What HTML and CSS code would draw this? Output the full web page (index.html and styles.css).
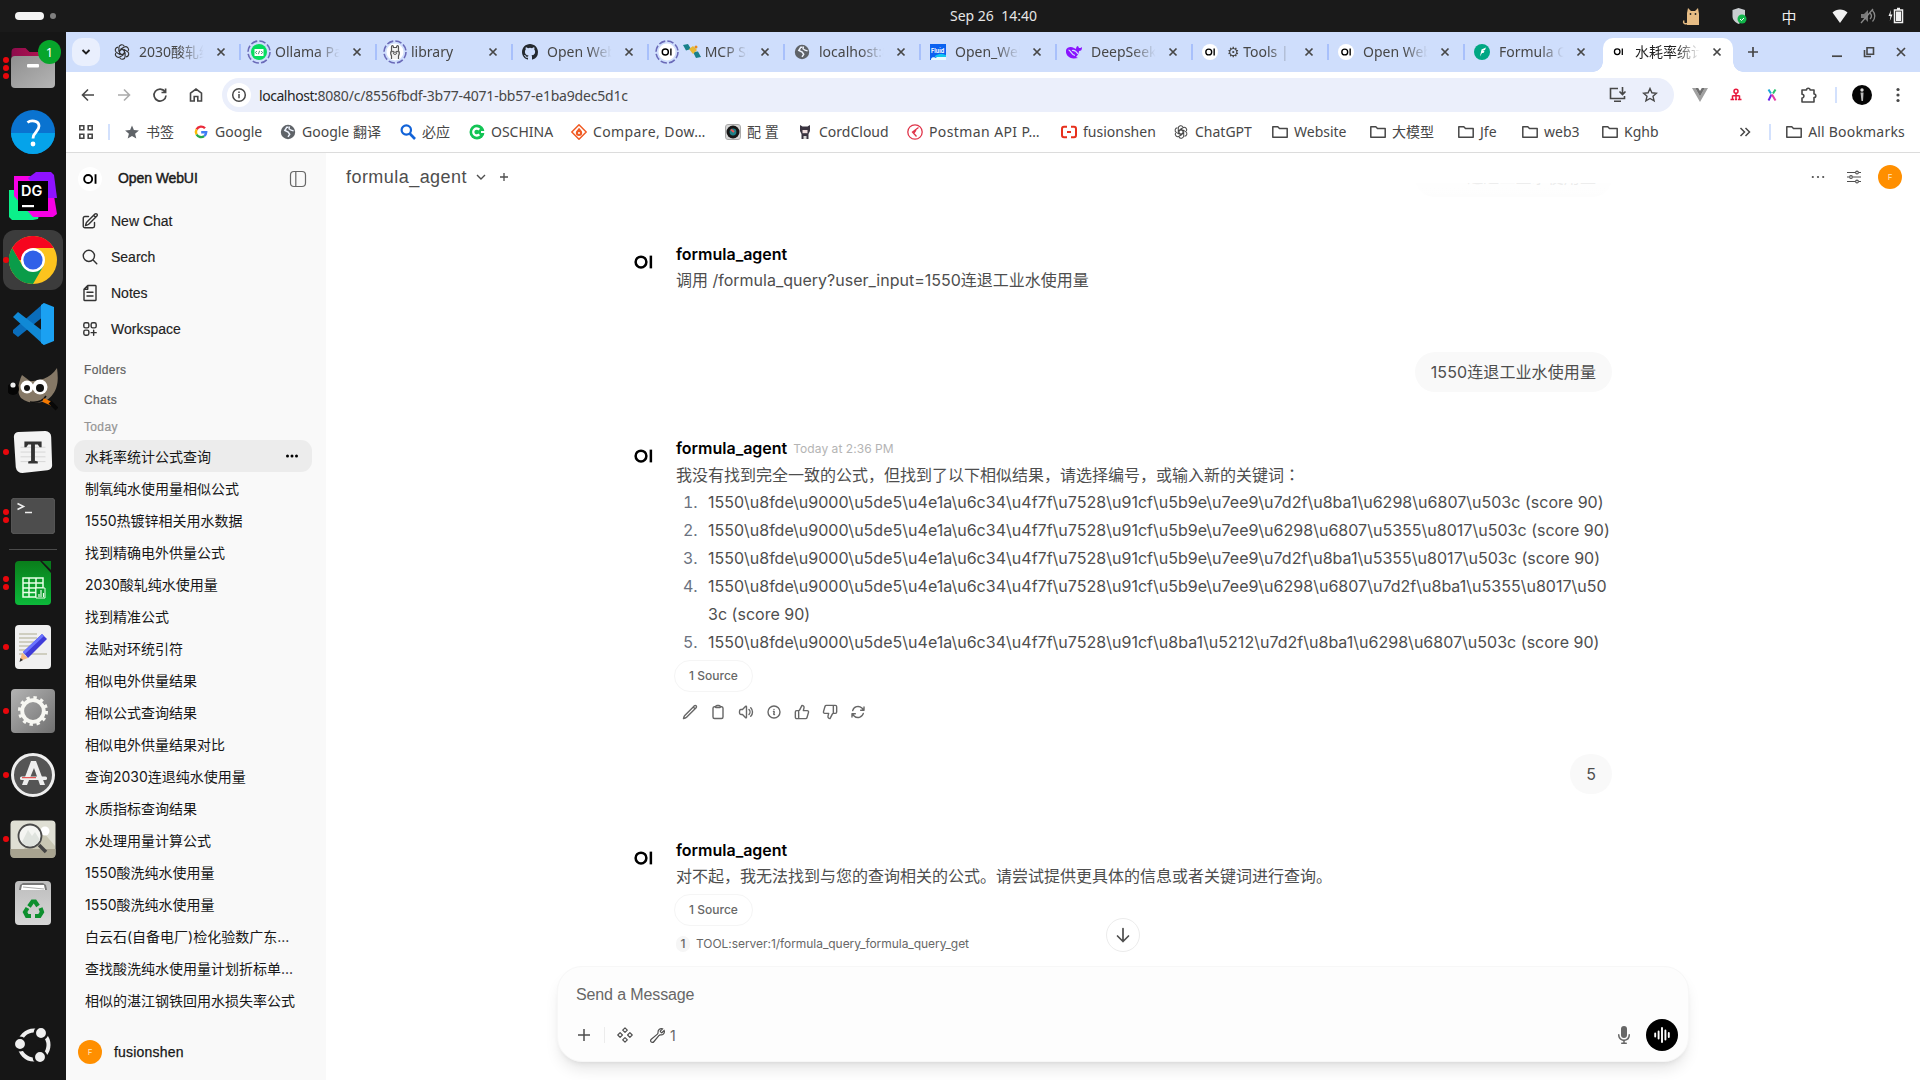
FILE: index.html
```html
<!DOCTYPE html>
<html lang="en">
<head>
<meta charset="utf-8">
<title>水耗率统计公式查询</title>
<link rel="stylesheet" href="styles.css">
</head>
<body>
<svg class="defs" aria-hidden="true">
  <defs>
    <linearGradient id="gGrey" x1="0" y1="0" x2="1" y2="1"><stop offset="0" stop-color="#8f8f8f"/><stop offset="1" stop-color="#b5b5b5"/></linearGradient>
    <linearGradient id="gGear" x1="0" y1="0" x2="1" y2="1"><stop offset="0" stop-color="#b4b4b4"/><stop offset="1" stop-color="#6f6f6f"/></linearGradient>
    <linearGradient id="gRed" x1="0" y1="0" x2="1" y2="0"><stop offset="0" stop-color="#8d0c4c"/><stop offset="1" stop-color="#c21553"/></linearGradient>
    <linearGradient id="gTrash" x1="0" y1="0" x2="0" y2="1"><stop offset="0" stop-color="#bdbdbd"/><stop offset="1" stop-color="#d6d6d6"/></linearGradient>
    <linearGradient id="gDoc" x1="0" y1="0" x2="0" y2="1"><stop offset="0" stop-color="#0a7d1b"/><stop offset="1" stop-color="#0cb93a"/></linearGradient>
    <symbol id="close" viewBox="0 0 16 16"><path d="M4.5 4.5l7 7M11.5 4.5l-7 7" fill="none" stroke="currentColor" stroke-width="1.7"/></symbol>
    <symbol id="folder" viewBox="0 0 16 16"><path d="M.8 13.2V2.8h5l1.700 1.800h7.700v8.600z" fill="none" stroke="currentColor" stroke-width="1.500" stroke-linejoin="round"/></symbol>
    <symbol id="globe" viewBox="0 0 16 16"><circle cx="8" cy="8" r="7.200" fill="#5f6368"/><path d="M8.500 3.200H6.800L4.800 6.500l3.400 1.600 1.500 2.200-1.700 2.500" fill="none" stroke="#eef3fd" stroke-width="1.500"/><path d="M9.500 2.500l-.5 2.200 2 1.500 2.600.6" fill="none" stroke="#eef3fd" stroke-width="1.300"/></symbol>
    <symbol id="openai" viewBox="0 0 16 16"><g fill="none" stroke="currentColor" stroke-width="1.150"><path id="pet" d="M8 5.200L4.900 7V3.600a2.900 2.900 0 0 1 5.400-1.400M8 5.200l2.600 1.500"/><use href="#pet" transform="rotate(60 8 8)"/><use href="#pet" transform="rotate(120 8 8)"/><use href="#pet" transform="rotate(180 8 8)"/><use href="#pet" transform="rotate(240 8 8)"/><use href="#pet" transform="rotate(300 8 8)"/></g></symbol>
    <symbol id="oi" viewBox="0 0 24 24"><circle cx="9.600" cy="12" r="4.300" fill="none" stroke="#000" stroke-width="2"/><path d="M17.500 6.900v10.200" stroke="#000" stroke-width="2"/></symbol>
    <symbol id="ring" viewBox="0 0 24 24"><circle cx="12" cy="12" r="11" fill="none" stroke="#6a6ab8" stroke-width="1.600" stroke-dasharray="6.500 2.140"/></symbol>
  </defs>
</svg>

<div class="desktop">
  <header class="topbar">
    <div class="workspaces"><i class="ws-on"></i><i class="ws-off"></i></div>
    <div class="clock">Sep 26&nbsp; 14:40</div>
    <div class="tray">
      <svg width="20" height="20" viewBox="0 0 20 20"><path d="M5 19V7l1-5 3 3h4l3-3 1 6v11z" fill="#e6bc84"/><path d="M5 17.500c-3 1-4-1-3-3" fill="none" stroke="#e6bc84" stroke-width="1.500"/><circle cx="8.500" cy="8" r=".9" fill="#222"/><circle cx="13.500" cy="8" r=".9" fill="#222"/></svg>
      <svg width="20" height="20" viewBox="0 0 20 20"><path d="M8.500 2l6.500 2v6c0 4-3 6-6.500 8C5 16 2.500 14 2.500 10V4z" fill="#c9cdd0"/><circle cx="12" cy="13" r="4.500" fill="#12b54b"/><path d="M10 13l1.500 1.500L14 12" stroke="#fff" fill="none"/></svg>
      <span class="ime">中</span>
      <svg width="18" height="18" viewBox="0 0 18 18"><path d="M1.500 5.500C5.500 1.600 12.500 1.600 16.500 5.500L9 16z" fill="#f2f2f2"/></svg>
      <svg width="18" height="18" viewBox="0 0 18 18"><path d="M2 7h3l4-4v12l-4-4H2z" fill="#7a7a7a"/><path d="M11 6c2 2 2 4 0 6M13.500 3.500c3 3 3 8 0 11M2 16L14 2" stroke="#8a8a8a" fill="none" stroke-width="1.300"/></svg>
      <svg width="18" height="18" viewBox="0 0 18 18"><path d="M4 3L1.500 9h2L2.800 14 5.500 7.500h-2z" fill="#f2f2f2"/><path d="M7.500 3h8v12.500h-8zM10 1.500h3" fill="none" stroke="#f2f2f2" stroke-width="1.500"/><path d="M9 4.500h5V14H9z" fill="#f2f2f2"/></svg>
    </div>
  </header>

  <div class="workarea">
    <nav class="dock">
      <div class="slot"><span class="dots"><i></i><i></i><i></i></span>
        <svg width="48" height="48" viewBox="0 0 48 48"><path d="M2.500 8a4 4 0 0 1 4-4h10l4 4h21a4 4 0 0 1 4 4v8h-43z" fill="url(#gRed)"/><rect x="2" y="12" width="44" height="32" rx="4" fill="url(#gGrey)"/><rect x="18" y="20" width="12" height="3.500" rx="1" fill="#fff"/></svg>
        <b class="badge">1</b></div>
      <div class="slot"><svg width="44" height="44" viewBox="0 0 44 44"><circle cx="22" cy="22" r="22" fill="#0a73d0"/><path d="M0 23a22 21 0 0 0 44 0z" fill="#05a3ea"/><path d="M16.500 12.500c3-2.500 11.500-2.500 11.500 3.500 0 6-6 6-6 12.500" fill="none" stroke="#fff" stroke-width="2.800"/><circle cx="22" cy="34" r="2.400" fill="#fff"/></svg></div>
      <div class="slot"><svg width="48" height="48" viewBox="0 0 48 48"><path d="M0 18l14 0 18 18-3 11-5 1H3l-3-3z" fill="#0bf08a"/><path d="M5 4h16l24 20 3 18-4 3H24L5 24z" fill="#f700e5"/><path d="M19 6l8-6h15l3 3 3 23-14 0z" fill="#8f12ff"/><rect x="9" y="9" width="30" height="30"/><rect x="13" y="33" width="12" height="2.200" fill="#fff"/><text x="12" y="24" class="dg">DG</text></svg></div>
      <div class="slot"><span class="dots"><i></i></span><div class="focus"><svg width="48" height="48" viewBox="0 0 48 48"><circle cx="24" cy="24" r="24" fill="#fcc31e"/><path d="M3.200 12A24 24 0 0 0 24 48L34.400 30 24 24 13.600 30z" fill="#0a9c49"/><path d="M3.200 12A24 24 0 0 1 44.800 12H24v12H10z" fill="#f6051f"/><circle cx="24" cy="24" r="12" fill="#fff"/><circle cx="24" cy="24" r="9.600" fill="#3060e8"/></svg></div></div>
      <div class="slot"><svg width="44" height="44" viewBox="0 0 44 44"><path d="M33 1v13L7 35l-5-4v-3z" fill="#0a6dbb"/><path d="M2 15l5-5 26 20v13z" fill="#1089d6"/><path d="M33 1l10 4v34l-10 4-3-2V3z" fill="#1ba1f2"/></svg></div>
      <div class="slot"><svg width="50" height="48" viewBox="0 0 50 48"><path d="M14 11l8 6c8 0 20-2 27-13 1 8 2 18-4 26-6 10-22 12-32 4-5-6-2-17 1-23z" fill="#857866"/><circle cx="5" cy="25" r="6" fill="#050505"/><circle cx="5" cy="21" r="2.600" fill="#eee"/><circle cx="19" cy="23" r="6.500" fill="#fff"/><circle cx="32" cy="23" r="7.500" fill="#fff"/><circle cx="19" cy="24" r="3" fill="#111"/><circle cx="32" cy="24" r="4" fill="#111"/><path d="M22 38c7 1 13-1 16-6" fill="none" stroke="#111" stroke-width="1.500"/><path d="M35 36l9 4" stroke="#f57900" stroke-width="4"/><path d="M42 38l7 7" stroke="#080808" stroke-width="4"/></svg></div>
      <div class="slot"><span class="dots"><i></i></span><svg class="typora" width="44" height="44" viewBox="0 0 46 46"><path d="M3 6a5 5 0 0 1 5-5l28-1a6 6 0 0 1 6 6l1 30a5 5 0 0 1-5 5L12 44a7 7 0 0 1-7-6z" fill="#f3f3f3"/><path d="M10 17h26M10 22h26M10 27h26M10 32h26" stroke="#d5d5d5"/><path d="M14 11h18v6h-2l-2-3h-3v17l3 1v2H18v-2l3-1V14h-3l-2 3h-2z" fill="#333"/></svg></div>
      <div class="slot"><span class="dots"><i></i><i></i></span><svg width="44" height="36" viewBox="0 0 44 36"><rect width="44" height="36" rx="4" fill="#4d4d4d" stroke="#666" stroke-width=".6"/><path d="M6.500 5.500l6 3-6 3M14 14.500h7" stroke="#eee" stroke-width="1.600" fill="none"/></svg></div>
      <div class="dock-sep"></div>
      <div class="slot"><span class="dots"><i></i><i></i></span><svg width="36" height="44" viewBox="0 0 36 44"><path d="M4 0h21l11 12v28a4 4 0 0 1-4 4H4a4 4 0 0 1-4-4V4a4 4 0 0 1 4-4z" fill="url(#gDoc)"/><path d="M27 0h9v9z" fill="#087a1d"/><path d="M8 17h20v19H8zM8 22h20M8 27h20M8 31.500h20M14 17v19M21 17v19" fill="none" stroke="#e8ffe8" stroke-width="1.500"/><path d="M21 27h9v10h-9z" fill="#0a9a2b" stroke="#e8ffe8"/><path d="M24 36v-3M26 36v-7M28.500 36v-4" stroke="#e8ffe8" stroke-width="1.200"/></svg></div>
      <div class="slot"><span class="dots"><i></i></span><svg width="36" height="44" viewBox="0 0 36 44"><rect width="36" height="44" rx="4" fill="#f0f0f0"/><path d="M4 9h18M4 13h18M4 17h15M4 21h13M4 25h10M4 29h28" stroke="#c4c2b0" stroke-width="1.600"/><path d="M5 36l2-8 6 5z" fill="#f5b97f"/><path d="M8 27L27 9l5 5-19 19z" fill="#3f3bd8"/><path d="M8 27L27 9l2 2-19 18z" fill="#6b74ff"/><path d="M4.500 37l1-4 2.500 2z" fill="#333"/></svg></div>
      <div class="slot"><span class="dots"><i></i></span><svg width="44" height="44" viewBox="0 0 44 44"><rect width="44" height="44" rx="4" fill="url(#gGear)"/><circle cx="22" cy="22" r="13.300" fill="none" stroke="#f7f7f2" stroke-width="3.500" stroke-dasharray="3.300 3.664"/><circle cx="22" cy="22" r="10.800" fill="none" stroke="#f7f7f2" stroke-width="3.800"/></svg></div>
      <div class="slot"><span class="dots"><i></i></span><svg width="44" height="44" viewBox="0 0 44 44"><circle cx="22" cy="22" r="20.500" fill="#555" stroke="#eee" stroke-width="3"/><path d="M20 8h5l9 24h-5l-6-17-7 17h-5z" fill="#eee"/><rect x="9" y="23.500" width="27" height="3.500" rx="1.500" fill="#eee"/><path d="M11 24.700h14" stroke="#e03030"/></svg></div>
      <div class="slot"><span class="dots"><i></i></span><svg width="46" height="38" viewBox="0 0 46 38"><rect x=".5" y=".5" width="45" height="37" rx="4" fill="#dfdfd4"/><path d="M.5 29h45v5a4 4 0 0 1-4 4h-37a4 4 0 0 1-4-4z" fill="#a8a390"/><path d="M28 6L45 26v3H14z" fill="#c9c7b4"/><circle cx="35" cy="11" r="4.500" fill="#fff"/><circle cx="20" cy="16" r="11.500" fill="#f4f5f2" stroke="#4a4a4a" stroke-width="1.800"/><path d="M12 22l6-12 4 6 3-4 5 8c-4 7-14 9-18 2z" fill="#dfe3de"/><path d="M29 25l7 7" stroke="#444" stroke-width="3.500"/></svg></div>
      <div class="slot"><svg width="36" height="44" viewBox="0 0 36 44"><rect width="36" height="44" rx="4" fill="url(#gTrash)"/><path d="M4 9l1-5 3-2h20l3 2 1 5z" fill="#777"/><path d="M6 9l1-5 22 0 1 5z" fill="#fff"/><path d="M8 6l21 2" stroke="#aaa" fill="none"/><g fill="none" stroke="#0d8f2e" stroke-width="4.200"><path d="M14 25.500l3.500-5h2.500l3 4.500"/><path d="M25.500 27l1.500 4-2.500 4H20"/><path d="M16 35h-4l-2-4 2.500-4"/></g></svg></div>
      <div class="slot last"><svg width="38" height="38" viewBox="0 0 38 38"><circle cx="20" cy="19" r="14.500" fill="none" stroke="#efefef" stroke-width="4"/><g fill="#efefef" stroke="#161616" stroke-width="2.500"><circle cx="27" cy="7" r="6.200"/><circle cx="6" cy="18" r="6.200"/><circle cx="26" cy="31" r="6.200"/></g></svg></div>
    </nav>

    <div class="browser">
      <div class="tabstrip">
        <div class="tab-search"><svg width="12" height="12" viewBox="0 0 12 12"><path d="M2.500 4l3.500 3.500L9.500 4" fill="none" stroke="#1f1f1f" stroke-width="1.900"/></svg></div>
        <div class="tabs">
          <div class="tab"><span class="fav"><svg width="16" height="16" color="#333"><use href="#openai"/></svg></span><span class="ttl">2030酸轧纯水</span><svg class="x"><use href="#close"/></svg></div>
          <div class="tab"><span class="fav"><svg width="24" height="24" viewBox="0 0 24 24"><use href="#ring"/><circle cx="12" cy="12" r="8" fill="#05dd5e"/><rect x="7.500" y="9" width="9" height="7" fill="#fff"/><path d="M9.800 11l-1.300 1.500 1.300 1.500M14.200 11l1.300 1.500-1.300 1.500M12.600 10.800l-1.200 3.400" stroke="#16794a" fill="none" stroke-width=".8"/></svg></span><span class="ttl">Ollama Pattern</span><svg class="x"><use href="#close"/></svg></div>
          <div class="tab"><span class="fav"><svg width="24" height="24" viewBox="0 0 24 24"><use href="#ring"/><circle cx="12" cy="12" r="8.500" fill="#fff"/><path d="M8.500 19v-3c-1-2-1-4 0-5V7c0-2 2-2 2 .5h3c0-2.500 2-2.500 2-.5v4c1 1 1 3 0 5v3" fill="#f2f2f2" stroke="#555" stroke-width="1.200"/><circle cx="10" cy="11.500" r=".7"/><circle cx="14" cy="11.500" r=".7"/><ellipse cx="12" cy="13.200" rx="1.600" ry="1.200" fill="none" stroke="#333" stroke-width=".8"/></svg></span><span class="ttl">library</span><svg class="x"><use href="#close"/></svg></div>
          <div class="tab"><span class="fav"><svg width="16" height="16" viewBox="0 0 16 16"><path fill="#24292f" d="M8 0C3.580 0 0 3.580 0 8c0 3.540 2.290 6.530 5.470 7.590.4.070.55-.17.55-.38 0-.19-.01-.82-.01-1.490-2.010.37-2.530-.49-2.690-.94-.09-.23-.48-.94-.82-1.130-.28-.15-.68-.52-.01-.53.63-.01 1.080.58 1.230.82.72 1.210 1.870.87 2.330.66.07-.52.28-.87.51-1.070-1.780-.2-3.640-.89-3.640-3.950 0-.87.31-1.590.82-2.150-.08-.2-.36-1.020.08-2.120 0 0 .67-.21 2.200.82a7.600 7.600 0 0 1 4 0c1.530-1.040 2.200-.82 2.200-.82.44 1.100.16 1.920.08 2.120.51.560.82 1.270.82 2.150 0 3.070-1.870 3.750-3.650 3.950.29.25.54.73.54 1.480 0 1.070-.01 1.930-.01 2.200 0 .21.150.46.55.38A8 8 0 0 0 16 8c0-4.420-3.580-8-8-8z"/></svg></span><span class="ttl">Open WebUI</span><svg class="x"><use href="#close"/></svg></div>
          <div class="tab"><span class="fav"><svg width="24" height="24" viewBox="0 0 24 24"><use href="#ring"/><circle cx="12" cy="12" r="8.500" fill="#fff"/><use href="#oi" x="3.500" y="3.500" width="17" height="17"/></svg></span><span class="ttl"><svg class="sat" width="18" height="16" viewBox="0 0 18 16"><path d="M0 2l5-1 3 5-5 1.500zM10 9l5-.5 3 5.500-5 1z" fill="#17808a"/><path d="M6 6l4-3 4 4-4 4z" fill="#e7b934"/><circle cx="13" cy="4" r="1.500" fill="#e88b1a"/></svg> MCP Support</span><svg class="x"><use href="#close"/></svg></div>
          <div class="tab"><span class="fav"><svg width="16" height="16"><use href="#globe"/></svg></span><span class="ttl">localhost:8000</span><svg class="x"><use href="#close"/></svg></div>
          <div class="tab"><span class="fav"><svg width="16" height="16" viewBox="0 0 16 16"><rect width="16" height="16" fill="#0b62f0"/><path d="M1 15c2-3 4-1 5-1 2-3 5-3 6-1 2-2 4 0 4 0v3H1z" fill="#e9fbff"/><path d="M5 12c4-3 8-2 11-1v2H5z" fill="#14c6ef"/><text x="1" y="9" class="fluid">Fluid</text></svg></span><span class="ttl">Open_WebUI</span><svg class="x"><use href="#close"/></svg></div>
          <div class="tab"><span class="fav"><svg width="16" height="16" viewBox="0 0 16 16"><path d="M0 6c1-3 5-4 8-2l2 1c0-2 1-3 2-3l1 2c1 0 2 0 3-1 0 3-1 4-3 4 0 3-2 5-3 6l2 1-4 .5C4 15-1 11 0 6z" fill="#8a14ff"/><path d="M6 6.500c3-1 5 2 6 3.500M2.500 6c2 0 3 5 6.500 5.500" fill="none" stroke="#cfdefc" stroke-width="1.200"/></svg></span><span class="ttl">DeepSeek - AI</span><svg class="x"><use href="#close"/></svg></div>
          <div class="tab"><span class="fav"><svg width="16" height="16" viewBox="0 0 16 16"><circle cx="8" cy="8" r="8" fill="#fff"/><use href="#oi" x=".2" y="-.2" width="16.400" height="16.400"/></svg></span><span class="ttl">⚙ Tools | Open</span><svg class="x"><use href="#close"/></svg></div>
          <div class="tab"><span class="fav"><svg width="16" height="16" viewBox="0 0 16 16"><circle cx="8" cy="8" r="8" fill="#fff"/><use href="#oi" x=".2" y="-.2" width="16.400" height="16.400"/></svg></span><span class="ttl">Open WebUI</span><svg class="x"><use href="#close"/></svg></div>
          <div class="tab"><span class="fav"><svg width="16" height="16" viewBox="0 0 16 16"><circle cx="8" cy="8" r="8" fill="#00a783"/><path d="M6 12.500L7.500 5.500 12 3.500 11 6 8.500 7h2l-1 2H8z" fill="#fff"/></svg></span><span class="ttl">Formula Query</span><svg class="x"><use href="#close"/></svg></div>
          <div class="tab active"><span class="fav"><svg width="16" height="16" viewBox="0 0 16 16"><use href="#oi" x="1" y="0" width="15.500" height="15.500"/></svg></span><span class="ttl">水耗率统计公式</span><svg class="x"><use href="#close"/></svg></div>
        </div>
        <svg class="newtab" width="14" height="14" viewBox="0 0 14 14"><path d="M7 2v10M2 7h10" stroke="#474747" stroke-width="1.700"/></svg>
        <div class="winctl">
          <svg width="14" height="14" viewBox="0 0 14 14"><path d="M2 11.200h10" stroke="#474747" stroke-width="1.700"/></svg>
          <svg width="14" height="14" viewBox="0 0 14 14"><path d="M5 2.800h6.500v6.500H5zM2.500 5v6.500H9" fill="none" stroke="#474747" stroke-width="1.600"/></svg>
          <svg width="14" height="14" viewBox="0 0 14 14"><path d="M3 3l8 8M11 3l-8 8" stroke="#474747" stroke-width="1.700"/></svg>
        </div>
      </div>

      <div class="toolbar">
        <div class="navbtns">
          <svg width="16" height="16" viewBox="0 0 16 16"><path d="M14 8H3M8 2.500L2.500 8 8 13.500" fill="none" stroke="#474747" stroke-width="1.600"/></svg>
          <svg width="16" height="16" viewBox="0 0 16 16"><path d="M2 8h11M8 2.500L13.500 8 8 13.500" fill="none" stroke="#ababab" stroke-width="1.600"/></svg>
          <svg width="16" height="16" viewBox="0 0 16 16"><path d="M13 4.700A6 6 0 1 0 14 8.500M13.600 1.500v4H9.500" fill="none" stroke="#474747" stroke-width="1.700"/></svg>
          <svg width="16" height="16" viewBox="0 0 16 16"><path d="M2.500 6.200L8 2l5.500 4.200V14H9.800V9.500H6.200V14H2.500z" fill="none" stroke="#474747" stroke-width="1.600"/></svg>
        </div>
        <div class="omnibox">
          <span class="info"><svg width="16" height="16" viewBox="0 0 16 16"><circle cx="8" cy="8" r="6.300" fill="none" stroke="#474747" stroke-width="1.500"/><path d="M8 7v4.200M8 4.400v1.500" stroke="#474747" stroke-width="1.500"/></svg></span>
          <span class="url"><em>localhost:</em>8080/c/8556fbdf-3b77-4071-bb57-e1ba9dec5d1c</span>
          <svg width="18" height="16" viewBox="0 0 18 16"><path d="M9 1.500H1.500v10h14V9M5 14.200h7M13.500 0v7M10.500 4.500l3 3 3-3" fill="none" stroke="#474747" stroke-width="1.600"/></svg>
          <svg width="16" height="16" viewBox="0 0 16 16"><path d="M8 1.500l1.900 4.300 4.600.4-3.500 3.100 1.100 4.600L8 11.500l-4.100 2.400L5 9.300 1.500 6.200l4.600-.4z" fill="none" stroke="#474747" stroke-width="1.400"/></svg>
        </div>
        <div class="exts">
          <svg width="16" height="16" viewBox="0 0 16 16"><path d="M0 1h3.200L8 9.500 12.800 1H16L8 15z" fill="#a0a0a0"/><path d="M3.200 1h3L8 4l1.800-3h3L8 9.500z" fill="#707070"/></svg>
          <svg width="14" height="16" viewBox="0 0 14 16"><circle cx="7" cy="4.200" r="2" fill="none" stroke="#e8173c" stroke-width="1.500"/><path d="M7 6v7M3.500 8.700h7M3.500 8.500V13M10.500 8.500V13M1.500 12.600h3.500M9 12.600h3.500M5.800 12.600h2.400" stroke="#e8173c" stroke-width="1.500"/></svg>
          <svg width="14" height="16" viewBox="0 0 14 16"><path d="M3.500 2.500l2.500 4" stroke="#1ba7d8" stroke-width="2"/><path d="M10.500 2.500L8 6.500" stroke="#27c26c" stroke-width="2"/><path d="M6.500 7.500l-3 6" stroke="#6a24e8" stroke-width="2"/><path d="M7 7.500l3.500 6" stroke="#e33aa4" stroke-width="2"/></svg>
          <svg width="18" height="18" viewBox="0 0 18 18"><path d="M2 4h4.500a1.800 1.800 0 0 1 3.600 0H14v4a1.800 1.800 0 0 1 0 3.600V16H2v-4a1.800 1.800 0 0 0 0-3.800z" fill="none" stroke="#474747" stroke-width="1.600" stroke-linejoin="round"/></svg>
          <i class="bar"></i>
          <svg width="20" height="20" viewBox="0 0 20 20"><circle cx="10" cy="10" r="10" fill="#050505"/><circle cx="10" cy="5" r="1.700" fill="#ddd"/><path d="M8.500 7.500h3L11 16H9.500z" fill="#bbb"/></svg>
          <svg width="16" height="16" viewBox="0 0 16 16" fill="#474747"><circle cx="8" cy="2.500" r="1.600"/><circle cx="8" cy="8" r="1.600"/><circle cx="8" cy="13.500" r="1.600"/></svg>
        </div>
      </div>

      <div class="bookmarks">
        <svg class="apps" width="16" height="16" viewBox="0 0 16 16"><path d="M1.800 1.800h4v4h-4zM10.200 1.800h4v4h-4zM1.800 10.200h4v4h-4zM10.200 10.200h4v4h-4z" fill="none" stroke="#474747" stroke-width="1.600"/></svg>
        <i class="bar"></i>
        <div class="marks">
          <span><svg viewBox="0 0 16 16"><path d="M8 1.500l1.900 4.600 5 .4-3.800 3.200 1.200 4.900L8 12l-4.300 2.600 1.200-4.900L1.100 6.500l5-.4z" fill="#5f6368"/></svg>书签</span>
          <span><svg viewBox="0 0 16 16"><g fill="none" stroke-width="2.400"><path d="M12 4.300A5.200 5.200 0 0 0 3.600 5.300" stroke="#ea2b3a"/><path d="M3.600 5.300a5.200 5.200 0 0 0 0 5.200" stroke="#fcba05"/><path d="M3.600 10.500a5.200 5.200 0 0 0 7.600 1.600" stroke="#25a84c"/><path d="M11.200 12.100A5.200 5.200 0 0 0 13.200 8.200H8.200" stroke="#3e7df5"/></g></svg>Google</span>
          <span><svg><use href="#globe"/></svg>Google 翻译</span>
          <span><svg viewBox="0 0 16 16"><circle cx="6.300" cy="6" r="4.700" fill="none" stroke="#1263d8" stroke-width="2.200"/><path d="M9.700 9.500L15 15" stroke="#1263d8" stroke-width="2.600"/></svg>必应</span>
          <span><svg viewBox="0 0 16 16"><circle cx="8" cy="8" r="7.500" fill="#12c454"/><path d="M10.300 5.600a3.500 3.500 0 1 0 0 4.800" fill="none" stroke="#fff" stroke-width="2.300"/><path d="M12 7h4v2h-4z" fill="#fff"/></svg>OSCHINA</span>
          <span class="cut"><svg viewBox="0 0 16 16"><path d="M8 .8L15.200 8 8 15.200.8 8z" fill="none" stroke="#f05a22" stroke-width="1.500" stroke-linejoin="round"/><path d="M8 3.800c2 2 3.200 3.500 3.200 5a3.200 3.200 0 0 1-6.400 0c0-1.500 1.700-3 3.200-5z" fill="#f05a22"/><circle cx="8" cy="9" r="1" fill="#fff"/></svg>Compare, Dow…</span>
          <span><svg viewBox="0 0 16 16"><rect x=".5" y=".5" width="15" height="15" rx="2.500" fill="#d8d8d8" stroke="#aaa"/><circle cx="8" cy="8" r="6.500" fill="#161616"/><circle cx="8" cy="8" r="3.400" fill="#1e7f86"/><path d="M6 5.500l3 2.500" stroke="#e55" stroke-width="2"/></svg>配 置</span>
          <span><svg viewBox="0 0 16 16"><path d="M3 1l2.500 1.500h5L13 1v6l-1.500 3v5h-7v-5L3 7z" fill="#3a3440"/><rect x="5.500" y="6" width="5" height="3.200" fill="#f0dede"/><path d="M6.500 12h3v3h-3z" fill="#d8d8d8"/></svg>CordCloud</span>
          <span class="cut"><svg viewBox="0 0 16 16"><circle cx="8" cy="8" r="7.200" fill="none" stroke="#e0354a" stroke-width="1.300"/><path d="M11.500 3.500L5.500 8l4 4.500M9 6L6.500 9.500" fill="none" stroke="#e0354a" stroke-width="1.300"/></svg>Postman API P…</span>
          <span><svg viewBox="0 0 16 16"><path d="M6 2.800H3Q1 2.800 1 5v6q0 2.200 2 2.200h3M10 2.800h3q2 0 2 2.200v6q0 2.200-2 2.200h-3M6 8h4" fill="none" stroke="#e7301c" stroke-width="2"/></svg>fusionshen</span>
          <span><svg viewBox="0 0 16 16"><use href="#openai" x="1" y="1" width="14" height="14"/></svg>ChatGPT</span>
          <span><svg><use href="#folder"/></svg>Website</span>
          <span><svg><use href="#folder"/></svg>大模型</span>
          <span><svg><use href="#folder"/></svg>Jfe</span>
          <span><svg><use href="#folder"/></svg>web3</span>
          <span><svg><use href="#folder"/></svg>Kghb</span>
        </div>
        <svg class="more" width="12" height="12" viewBox="0 0 12 12"><path d="M1.500 2L5.500 6l-4 4M6.500 2l4 4-4 4" fill="none" stroke="#474747" stroke-width="1.500"/></svg>
        <i class="bar"></i>
        <span class="all"><svg><use href="#folder"/></svg>All Bookmarks</span>
      </div>

      <div class="page">
        <aside class="side">
          <div class="brand">
            <span class="logo"><svg width="24" height="24" viewBox="0 0 24 24"><use href="#oi" x="1.200" y=".8" width="22.400" height="22.400"/></svg></span>
            <strong>Open WebUI</strong>
            <svg width="18" height="18" viewBox="0 0 18 18"><rect x="1.500" y="1.500" width="15" height="15" rx="3.500" fill="none" stroke="#676767" stroke-width="1.200"/><path d="M6.800 2v14" stroke="#676767" stroke-width="1.200"/></svg>
          </div>
          <div class="nav">
            <a><svg viewBox="0 0 24 24"><path d="m16.862 4.487 1.687-1.688a1.875 1.875 0 1 1 2.652 2.652L10.582 16.070a4.500 4.500 0 0 1-1.897 1.130L6 18l.8-2.685a4.500 4.500 0 0 1 1.130-1.897l8.932-8.931Zm0 0L19.500 7.125M18 14v4.750A2.250 2.250 0 0 1 15.750 21H5.250A2.250 2.250 0 0 1 3 18.750V8.250A2.250 2.250 0 0 1 5.250 6H10"/></svg>New Chat</a>
            <a><svg viewBox="0 0 24 24"><path d="m21 21-5.197-5.197m0 0A7.500 7.500 0 1 0 5.196 5.196a7.500 7.500 0 0 0 10.607 10.607Z"/></svg>Search</a>
            <a><svg viewBox="0 0 24 24"><path d="M4 21.400V7l5-5h10.400a.6.600 0 0 1 .6.600v18.800a.6.600 0 0 1-.6.600H4.600a.6.600 0 0 1-.6-.6ZM4 7h5V2M8 11h8M8 16h8"/></svg>Notes</a>
            <a><svg viewBox="0 0 24 24"><path d="M13.500 16.875h3.375m0 0h3.375m-3.375 0V13.500m0 3.375v3.375M6 10.500h2.250a2.250 2.250 0 0 0 2.250-2.250V6a2.250 2.250 0 0 0-2.250-2.250H6A2.250 2.250 0 0 0 3.750 6v2.250A2.250 2.250 0 0 0 6 10.500Zm0 9.750h2.250A2.250 2.250 0 0 0 10.500 18v-2.250a2.250 2.250 0 0 0-2.250-2.250H6a2.250 2.250 0 0 0-2.250 2.250V18A2.250 2.250 0 0 0 6 20.250Zm9.750-9.750H18a2.250 2.250 0 0 0 2.250-2.250V6A2.250 2.250 0 0 0 18 3.750h-2.250A2.250 2.250 0 0 0 13.500 6v2.250a2.250 2.250 0 0 0 2.250 2.250Z"/></svg>Workspace</a>
          </div>
          <div class="label folders">Folders</div>
          <div class="label">Chats</div>
          <div class="label day">Today</div>
          <ul class="chats">
            <li class="sel">水耗率统计公式查询<svg width="16" height="16" viewBox="0 0 16 16"><circle cx="3.500" cy="8" r="1.500"/><circle cx="8" cy="8" r="1.500"/><circle cx="12.500" cy="8" r="1.500"/></svg></li>
            <li>制氧纯水使用量相似公式</li>
            <li>1550热镀锌相关用水数据</li>
            <li>找到精确电外供量公式</li>
            <li>2030酸轧纯水使用量</li>
            <li>找到精准公式</li>
            <li>法贴对环统引符</li>
            <li>相似电外供量结果</li>
            <li>相似公式查询结果</li>
            <li>相似电外供量结果对比</li>
            <li>查询2030连退纯水使用量</li>
            <li>水质指标查询结果</li>
            <li>水处理用量计算公式</li>
            <li>1550酸洗纯水使用量</li>
            <li>1550酸洗纯水使用量</li>
            <li>白云石(自备电厂)检化验数广东...</li>
            <li>查找酸洗纯水使用量计划折标单...</li>
            <li>相似的湛江钢铁回用水损失率公式</li>
          </ul>
          <div class="user"><span class="avatar">F</span>fusionshen</div>
        </aside>

        <main class="main">
          <div class="mainbar">
            <span class="model">formula_agent</span>
            <svg class="chev" width="12" height="12" viewBox="0 0 12 12"><path d="M2 4l4 4 4-4" fill="none" stroke="#4e4e4e" stroke-width="1.400"/></svg>
            <svg class="add" width="10" height="10" viewBox="0 0 10 10"><path d="M5 1v8M1 5h8" stroke="#4e4e4e" stroke-width="1.300"/></svg>
            <svg class="el" width="16" height="16" viewBox="0 0 16 16" fill="#4e4e4e"><circle cx="2.800" cy="8" r="1.100"/><circle cx="8" cy="8" r="1.100"/><circle cx="13.200" cy="8" r="1.100"/></svg>
            <svg class="tune" width="16" height="16" viewBox="0 0 16 16"><path d="M1 3.500h8M13 3.500h2M1 8h2M7 8h8M1 12.500h8M13 12.500h2" stroke="#4e4e4e" stroke-width="1.200"/><g fill="none" stroke="#4e4e4e" stroke-width="1.100"><circle cx="11" cy="3.500" r="1.400"/><circle cx="5" cy="8" r="1.400"/><circle cx="11" cy="12.500" r="1.400"/></g></svg>
            <span class="avatar">F</span>
          </div>

          <div class="thread">
            <div class="ask first"><p>1550连退工业水使用量</p></div>
            <article class="msg m1">
              <svg class="face"><use href="#oi"/></svg>
              <div class="body"><h3>formula_agent</h3><p>调用 /formula_query?user_input=1550连退工业水使用量</p></div>
            </article>
            <div class="ask a2"><p>1550连退工业水使用量</p></div>
            <article class="msg m2">
              <svg class="face"><use href="#oi"/></svg>
              <div class="body">
                <h3>formula_agent<time>Today at 2:36 PM</time></h3>
                <p>我没有找到完全一致的公式，但找到了以下相似结果，请选择编号，或输入新的关键词<span class="colon" lang="zh-TW">：</span></p>
                <ol>
                  <li>1550\u8fde\u9000\u5de5\u4e1a\u6c34\u4f7f\u7528\u91cf\u5b9e\u7ee9\u7d2f\u8ba1\u6298\u6807\u503c (score 90)</li>
                  <li>1550\u8fde\u9000\u5de5\u4e1a\u6c34\u4f7f\u7528\u91cf\u5b9e\u7ee9\u6298\u6807\u5355\u8017\u503c (score 90)</li>
                  <li>1550\u8fde\u9000\u5de5\u4e1a\u6c34\u4f7f\u7528\u91cf\u5b9e\u7ee9\u7d2f\u8ba1\u5355\u8017\u503c (score 90)</li>
                  <li>1550\u8fde\u9000\u5de5\u4e1a\u6c34\u4f7f\u7528\u91cf\u5b9e\u7ee9\u6298\u6807\u7d2f\u8ba1\u5355\u8017\u50<br>3c (score 90)</li>
                  <li>1550\u8fde\u9000\u5de5\u4e1a\u6c34\u4f7f\u7528\u91cf\u8ba1\u5212\u7d2f\u8ba1\u6298\u6807\u503c (score 90)</li>
                </ol>
                <span class="pill">1 Source</span>
                <div class="acts">
                  <svg viewBox="0 0 24 24"><path d="m16.862 4.487 1.687-1.688a1.875 1.875 0 1 1 2.652 2.652L6.832 19.820a4.500 4.500 0 0 1-1.897 1.130l-2.685.8.8-2.685a4.500 4.500 0 0 1 1.130-1.897L16.863 4.487Zm0 0L19.500 7.125"/></svg>
                  <svg viewBox="0 0 24 24"><path d="M15.666 3.888A2.250 2.250 0 0 0 13.500 2.250h-3c-1.030 0-1.900.693-2.166 1.638m7.332 0c.055.194.084.400.084.612a.750.750 0 0 1-.750.750H9a.750.750 0 0 1-.750-.750c0-.212.030-.418.084-.612m7.332 0c.646.049 1.288.110 1.927.184 1.100.128 1.907 1.077 1.907 2.185V19.500a2.250 2.250 0 0 1-2.250 2.250H6.750A2.250 2.250 0 0 1 4.500 19.500V6.257c0-1.108.806-2.057 1.907-2.185a48.208 48.208 0 0 1 1.927-.184"/></svg>
                  <svg viewBox="0 0 24 24"><path d="M19.114 5.636a9 9 0 0 1 0 12.728M16.463 8.288a5.250 5.250 0 0 1 0 7.424M6.750 8.250l4.720-4.720a.750.750 0 0 1 1.280.530v15.880a.750.750 0 0 1-1.280.530l-4.720-4.720H4.510c-.880 0-1.704-.507-1.938-1.354A9.009 9.009 0 0 1 2.250 12c0-.830.112-1.633.322-2.396C2.806 8.756 3.630 8.250 4.510 8.250H6.750Z"/></svg>
                  <svg viewBox="0 0 24 24"><path d="m11.250 11.250.041-.020a.750.750 0 0 1 1.063.852l-.708 2.836a.750.750 0 0 0 1.063.853l.041-.021M21 12a9 9 0 1 1-18 0 9 9 0 0 1 18 0Zm-9-3.750h.008v.008H12V8.250Z"/></svg>
                  <svg viewBox="0 0 24 24"><path d="M7 10v12M15 5.880 14 10h5.830a2 2 0 0 1 1.920 2.560l-2.330 8A2 2 0 0 1 17.500 22H4a2 2 0 0 1-2-2v-8a2 2 0 0 1 2-2h2.760a2 2 0 0 0 1.790-1.110L12 2a3.130 3.130 0 0 1 3 3.880Z"/></svg>
                  <svg viewBox="0 0 24 24"><path d="M17 14V2M9 18.120 10 14H4.170a2 2 0 0 1-1.920-2.560l2.330-8A2 2 0 0 1 6.500 2H20a2 2 0 0 1 2 2v8a2 2 0 0 1-2 2h-2.760a2 2 0 0 0-1.790 1.110L12 22a3.130 3.130 0 0 1-3-3.880Z"/></svg>
                  <svg viewBox="0 0 24 24"><path d="M16.023 9.348h4.992v-.001M2.985 19.644v-4.992m0 0h4.992m-4.993 0 3.181 3.183a8.250 8.250 0 0 0 13.803-3.700M4.031 9.865a8.250 8.250 0 0 1 13.803-3.700l3.181 3.182m0-4.991v4.990"/></svg>
                </div>
              </div>
            </article>
            <div class="ask a3"><p>5</p></div>
            <article class="msg m3">
              <svg class="face"><use href="#oi"/></svg>
              <div class="body">
                <h3>formula_agent</h3>
                <p>对不起，我无法找到与您的查询相关的公式。请尝试提供更具体的信息或者关键词进行查询。</p>
                <span class="pill">1 Source</span>
                <div class="cite"><b>1</b>TOOL:server:1/formula_query_formula_query_get</div>
              </div>
            </article>
          </div>

          <div class="composer-wrap">
            <div class="todown"><svg width="20" height="20" viewBox="0 0 20 20"><path d="M10 3.500v13M4.500 11l5.500 5.500 5.500-5.500" fill="none" stroke="#4e4e4e" stroke-width="1.700" stroke-linecap="round" stroke-linejoin="round"/></svg></div>
            <div class="composer">
              <div class="ph">Send a Message</div>
              <div class="tools">
                <svg class="t-plus" width="14" height="14" viewBox="0 0 14 14"><path d="M7 1v12M1 7h12" stroke="#4e4e4e" stroke-width="1.500"/></svg>
                <i></i>
                <svg class="t-flow" width="16" height="16" viewBox="0 0 16 16"><g fill="none" stroke="#4e4e4e" stroke-width="1.200"><path d="M8 .8l2.300 2.300L8 5.400 5.700 3.100zM8 10.600l2.300 2.300L8 15.200l-2.300-2.300zM3.100 5.700L5.400 8l-2.300 2.300L.8 8zM12.900 5.700L15.200 8l-2.300 2.300L10.600 8z" stroke-linejoin="round"/></g></svg>
                <svg class="t-wrench" width="17" height="17" viewBox="0 0 24 24"><path d="M21.750 6.750a4.500 4.500 0 0 1-4.884 4.484c-1.076-.091-2.264.071-2.950.904l-7.152 8.684a2.548 2.548 0 1 1-3.586-3.586l8.684-7.152c.833-.686.995-1.874.904-2.950a4.500 4.500 0 0 1 6.336-4.486l-3.276 3.276a3.004 3.004 0 0 0 2.250 2.250l3.276-3.276c.256.565.398 1.192.398 1.852ZM4.867 19.125h.008" fill="none" stroke="#4e4e4e" stroke-width="1.700"/></svg>
                <span>1</span>
                <svg class="t-mic" width="20" height="20" viewBox="0 0 20 20" fill="#676767"><path d="M7 4a3 3 0 0 1 6 0v6a3 3 0 1 1-6 0V4Z"/><path d="M5.500 9.643a.750.750 0 0 0-1.500 0V10c0 3.060 2.290 5.585 5.250 5.954V17.500h-1.500a.750.750 0 0 0 0 1.500h4.500a.750.750 0 0 0 0-1.500h-1.500v-1.546A6.001 6.001 0 0 0 16 10v-.357a.750.750 0 0 0-1.500 0V10a4.500 4.500 0 0 1-9 0v-.357Z"/></svg>
                <svg class="t-voice" width="32" height="32" viewBox="0 0 32 32"><circle cx="16" cy="16" r="16"/><path d="M9.200 14.500v3M12.600 12.500v7M16 9v14M19.400 11.500v9M22.800 14v4" stroke="#fff" stroke-width="1.900" stroke-linecap="round"/></svg>
              </div>
            </div>
          </div>
        </main>
      </div>
    </div>
  </div>
</div>
</body>
</html>
```
FILE: styles.css
```css
* { box-sizing: border-box; }
body { margin: 0; width: 1920px; height: 1080px; overflow: hidden; background: #161616; }
.defs { position: absolute; width: 0; height: 0; }
svg { display: block; flex: none; }
p, h3, ul, ol { margin: 0; padding: 0; }
.desktop { display: flex; flex-direction: column; width: 1920px; height: 1080px; font-family: "Noto Sans", "Noto Sans CJK SC", "DejaVu Sans", sans-serif; font-size: 14px; }

/* system bar */
.topbar { display: grid; grid-template-columns: 950px 1fr auto; align-items: center; height: 32px; background: #1a1a1a; color: #e6e6e6; }
.workspaces { display: flex; align-items: center; gap: 6px; padding-left: 15px; }
.ws-on { width: 29px; height: 8px; border-radius: 4px; background: #f4f4f4; }
.ws-off { width: 6px; height: 6px; border-radius: 50%; background: #808080; }
.clock { line-height: 32px; white-space: nowrap; }
.tray { display: flex; align-items: center; padding-right: 15px; }
.tray svg:nth-child(2) { margin: 0 0 0 28px; }
.ime { margin: 0 34px 0 31px; color: #eee; font-size: 15px; width: 16px; text-align: center; }
.ime + svg + svg { margin: 0 10px 0 10px; }

.workarea { display: flex; flex: 1; min-height: 0; }

/* dock */
.dock { display: flex; flex-direction: column; width: 66px; padding: 4px 0 3px; background: #161616; }
.slot { position: relative; display: flex; align-items: center; justify-content: center; height: 64px; flex: none; }
.slot.last { margin-top: auto; }
.typora { margin-top: 1px; }
.dots { position: absolute; left: 3px; top: 0; height: 64px; display: flex; flex-direction: column; justify-content: center; gap: 2.200px; }
.dots i { width: 5.800px; height: 5.800px; border-radius: 50%; background: #e8070c; }
.badge { position: absolute; left: 38px; top: 4px; width: 23px; height: 24px; border-radius: 50%; background: #07a52b; color: #fff; font-weight: 400; font-size: 13px; line-height: 24px; text-align: center; }
.focus { display: flex; align-items: center; justify-content: center; width: 60px; height: 60px; border-radius: 12px; background: #3c3c3c; }
.dg { font: 600 14.500px "Inter", sans-serif; fill: #fff; }
.fluid { font: 700 5.500px "Inter", sans-serif; fill: #fff; }
.dock-sep { width: 48px; height: 1px; margin: 1px auto; background: #4b4b4b; }

/* browser chrome */
.browser { display: flex; flex-direction: column; flex: 1; min-width: 0; background: #fff; }
.tabstrip { display: flex; height: 40px; padding: 0 10px 0 6px; align-items: center; background: #cfdefc; }
.tab-search { display: flex; align-items: center; justify-content: center; width: 28px; height: 28px; border-radius: 10px; background: #e9effd; }
.tabs { display: flex; align-items: flex-end; height: 40px; padding: 0 0 0 7px; }
.tab { display: flex; align-items: center; width: 130px; height: 28px; margin: 0 6px 6px 0; position: relative; color: #474747; }
.tab::after { content: ""; position: absolute; right: -4px; top: 6px; width: 2px; height: 16px; background: #a8c0fb; }
.tab:nth-child(11)::after { display: none; }
.tab .fav { display: flex; align-items: center; justify-content: center; width: 24px; height: 24px; margin: 0 5px 0 3px; }
.tab:nth-child(2) .fav, .tab:nth-child(3) .fav, .tab:nth-child(5) .fav { margin: 0 4px; }
.tab .ttl { width: 66px; overflow: hidden; white-space: nowrap; line-height: 28px; -webkit-mask-image: linear-gradient(90deg, #000 62%, transparent 98%); mask-image: linear-gradient(90deg, #000 62%, transparent 98%); }
.sat { display: inline-block; vertical-align: -2px; }
.tab .x { width: 16px; height: 16px; margin-left: 8px; color: #474747; }
.tab.active { height: 34px; margin: 0; padding-bottom: 6px; border-radius: 10px 10px 0 0; background: #fff; color: #1f1f1f; }
.tab.active::before, .tab.active::after { content: ""; position: absolute; top: auto; bottom: 0; width: 10px; height: 10px; }
.tab.active::before { left: -10px; background: radial-gradient(circle at 0 0, transparent 9.500px, #fff 10px); }
.tab.active::after { right: -10px; background: radial-gradient(circle at 100% 0, transparent 9.500px, #fff 10px); }
.newtab { margin-left: 13px; }
.winctl { display: flex; gap: 18px; margin-left: auto; padding-right: 2px; }

.toolbar { display: flex; align-items: center; height: 46px; }
.navbtns { display: flex; gap: 20px; padding-left: 14px; width: 156px; }
.omnibox { display: flex; align-items: center; width: 1452px; height: 34px; padding: 0 16px 0 5px; border-radius: 17px; background: #ebeffb; }
.info { display: flex; align-items: center; justify-content: center; width: 24px; height: 24px; border-radius: 50%; background: #fff; }
.url { margin-left: 8px; flex: 1; color: #474747; font-size: 14px; letter-spacing: -.2px; white-space: nowrap; }
.url em { font-style: normal; color: #1f1f1f; letter-spacing: -.45px; }
.omnibox > svg:last-child { margin-left: 15px; }
.exts { display: flex; align-items: center; padding-left: 18px; }
.exts svg:nth-child(2) { margin-left: 21px; }
.exts svg:nth-child(3) { margin-left: 22px; }
.exts svg:nth-child(4) { margin-left: 21px; }
.exts svg:nth-child(6) { margin-left: 15px; }
.exts svg:nth-child(7) { margin-left: 18px; }
.bar { width: 2px; height: 16px; background: #d3e1fd; }
.exts .bar { margin-left: 17px; }

.bookmarks { display: flex; align-items: center; height: 35px; padding: 0 15px 7px 12px; border-bottom: 1px solid #dcdcdc; color: #474747; white-space: nowrap; }
.bookmarks .apps { margin-right: 14px; }
.marks { display: grid; grid-template-columns: 69px 87px 120px 69px 102px 154px 72px 110px 154px 112px 99px 98px 88px 64px 80px 80px; margin-left: 14px; }
.marks span, .all { display: flex; align-items: center; gap: 6px; line-height: 22px; }
.marks .cut { letter-spacing: .4px; }
.marks svg, .all svg { width: 16px; height: 16px; }
.more { margin: 0 18px 0 auto; }
.bookmarks .all { margin-left: 15px; letter-spacing: .2px; }

/* sidebar */
.page { display: flex; flex: 1; min-height: 0; }
.side { display: flex; flex-direction: column; width: 260px; background: #f9f9f9; font-family: "Liberation Sans", "Noto Sans CJK SC", sans-serif; color: #222; }
.brand { display: flex; align-items: center; height: 34px; margin-top: 9px; padding: 0 19px 0 12px; }
.logo { width: 24px; height: 24px; border-radius: 50%; background: #fff; }
.brand strong { flex: 1; margin: -2px 0 0 16px; font-weight: 400; font-size: 14px; letter-spacing: -.1px; -webkit-text-stroke: .45px #1a1a1a; color: #1a1a1a; }
.nav { margin-top: 7px; }
.nav a { display: flex; align-items: center; gap: 12px; height: 36px; padding-left: 15px; font-size: 14px; -webkit-text-stroke: .15px #222; }
.nav svg { width: 18px; height: 18px; fill: none; stroke: #333; stroke-width: 1.900; stroke-linecap: round; stroke-linejoin: round; }
.label { height: 30px; padding-left: 18px; font-size: 12px; line-height: 30px; letter-spacing: .35px; color: #606060; -webkit-text-stroke: .2px #606060; }
.label.folders { margin-top: 8px; }
.label.day { height: 25px; line-height: 24px; color: #959595; -webkit-text-stroke: .2px #959595; }
.chats { list-style: none; margin: 0 14px 0 8px; font-family: "Inter", "Noto Sans CJK SC", sans-serif; }
.chats li { display: flex; align-items: center; justify-content: space-between; height: 32px; padding: 0 12px 0 11px; border-radius: 11px; font-size: 14px; color: #171717; white-space: nowrap; }
.chats .sel { background: #ececec; }
.user { display: flex; align-items: center; gap: 12px; margin: auto 0 16px; padding-left: 12px; font-size: 14px; line-height: 22px; letter-spacing: .2px; color: #171717; -webkit-text-stroke: .25px #171717; }
.avatar { display: flex; align-items: center; justify-content: center; width: 24px; height: 24px; border-radius: 50%; background: #ff8f00; color: #ffe6c4; font: 8px "Inter", sans-serif; -webkit-text-stroke: 0; letter-spacing: 0; }

/* chat */
.main { position: relative; flex: 1; min-width: 0; background: #fff; overflow: hidden; font-family: "Inter", "Noto Sans CJK SC", sans-serif; color: #4e4e4e; }
.mainbar { position: absolute; inset: 0 0 auto 0; z-index: 2; display: flex; align-items: center; height: 58px; padding: 0 18px 10px 20px; background: linear-gradient(#fff 52%, rgba(255,255,255,.9) 52%, rgba(255,255,255,.5)); }
.model { font: 18px "Liberation Sans", sans-serif; letter-spacing: .45px; color: #4e4e4e; }
.chev { margin-left: 8px; }
.add { margin-left: 12px; }
.el { margin-left: auto; }
.tune { margin: 0 16px 0 20px; }
.thread { width: 996px; margin: 0 auto; padding: 4px 9px 0 0; font-size: 16px; }
.ask { display: flex; justify-content: flex-end; }
.ask p { height: 40px; padding: 0 16px; border-radius: 20px; background: #f9f9f9; line-height: 41px; letter-spacing: .1px; }
.msg { display: flex; }
.face { width: 30px; height: 30px; margin: 5px 17px 0 4px; }
.m1 { margin-top: 45px; height: 52px; }
.a2 { margin-top: 58px; }
.m2 { margin-top: 44px; height: 288px; }
.a3 { margin-top: 30px; }
.m3 { margin-top: 44px; }
.body { flex: 1; }
.body h3 { height: 24px; font-size: 16px; font-weight: 600; line-height: 24px; color: #000; }
.body time { margin-left: 6px; font-size: 12px; font-weight: 400; letter-spacing: .05px; vertical-align: 1px; color: #b4b4b4; }
.body > p { height: 28px; line-height: 28px; white-space: nowrap; }
.colon { font-family: "Noto Sans CJK TC", sans-serif; }
.body ol { padding-left: 26px; line-height: 28px; white-space: nowrap; letter-spacing: .018px; }
.body li { padding-left: 6px; }
.body li::marker { color: #6b7280; }
.pill { display: block; width: 79px; height: 32px; margin: 4px 0 0 -2px; border: 1px solid #f5f5f5; border-radius: 16px; font-size: 12px; font-weight: 500; line-height: 30px; text-align: center; color: #676767; }
.acts { display: flex; gap: 12px; margin: 12px 0 0 6px; }
.acts svg { width: 16px; height: 16px; fill: none; stroke: #676767; stroke-width: 2.100; stroke-linecap: round; stroke-linejoin: round; }
.cite { display: flex; align-items: center; gap: 6px; margin-top: 10px; font-size: 12px; line-height: 16px; letter-spacing: -.05px; color: #676767; }
.cite b { width: 14px; height: 16px; border-radius: 8px; background: #f6f6f6; font-weight: 500; text-align: center; }

.composer-wrap { position: absolute; left: 231px; bottom: 18px; width: 1132px; }
.todown { position: absolute; left: 549px; top: -48px; display: flex; align-items: center; justify-content: center; width: 34px; height: 34px; border: 1px solid #ececec; border-radius: 50%; background: #fff; }
.composer { display: flex; flex-direction: column; justify-content: space-between; height: 96px; padding: 16px 10px 10px 18px; border: 1px solid #f7f7f7; border-radius: 25px; background: #fdfdfd; box-shadow: 0 10px 15px -3px rgba(0,0,0,.1), 0 4px 6px -4px rgba(0,0,0,.1); font-family: "Liberation Sans", sans-serif; }
.ph { font-size: 16px; line-height: 24px; letter-spacing: -.12px; color: #676767; }
.tools { display: flex; align-items: center; height: 32px; padding-left: 1px; }
.tools i { width: 1px; height: 16px; margin: 0 12px 0 13px; background: #ececec; }
.t-wrench { margin: 0 4px 0 16px; }
.tools span { font: 14px "Inter", sans-serif; color: #676767; }
.t-mic { margin: 0 12px 0 auto; }
```
